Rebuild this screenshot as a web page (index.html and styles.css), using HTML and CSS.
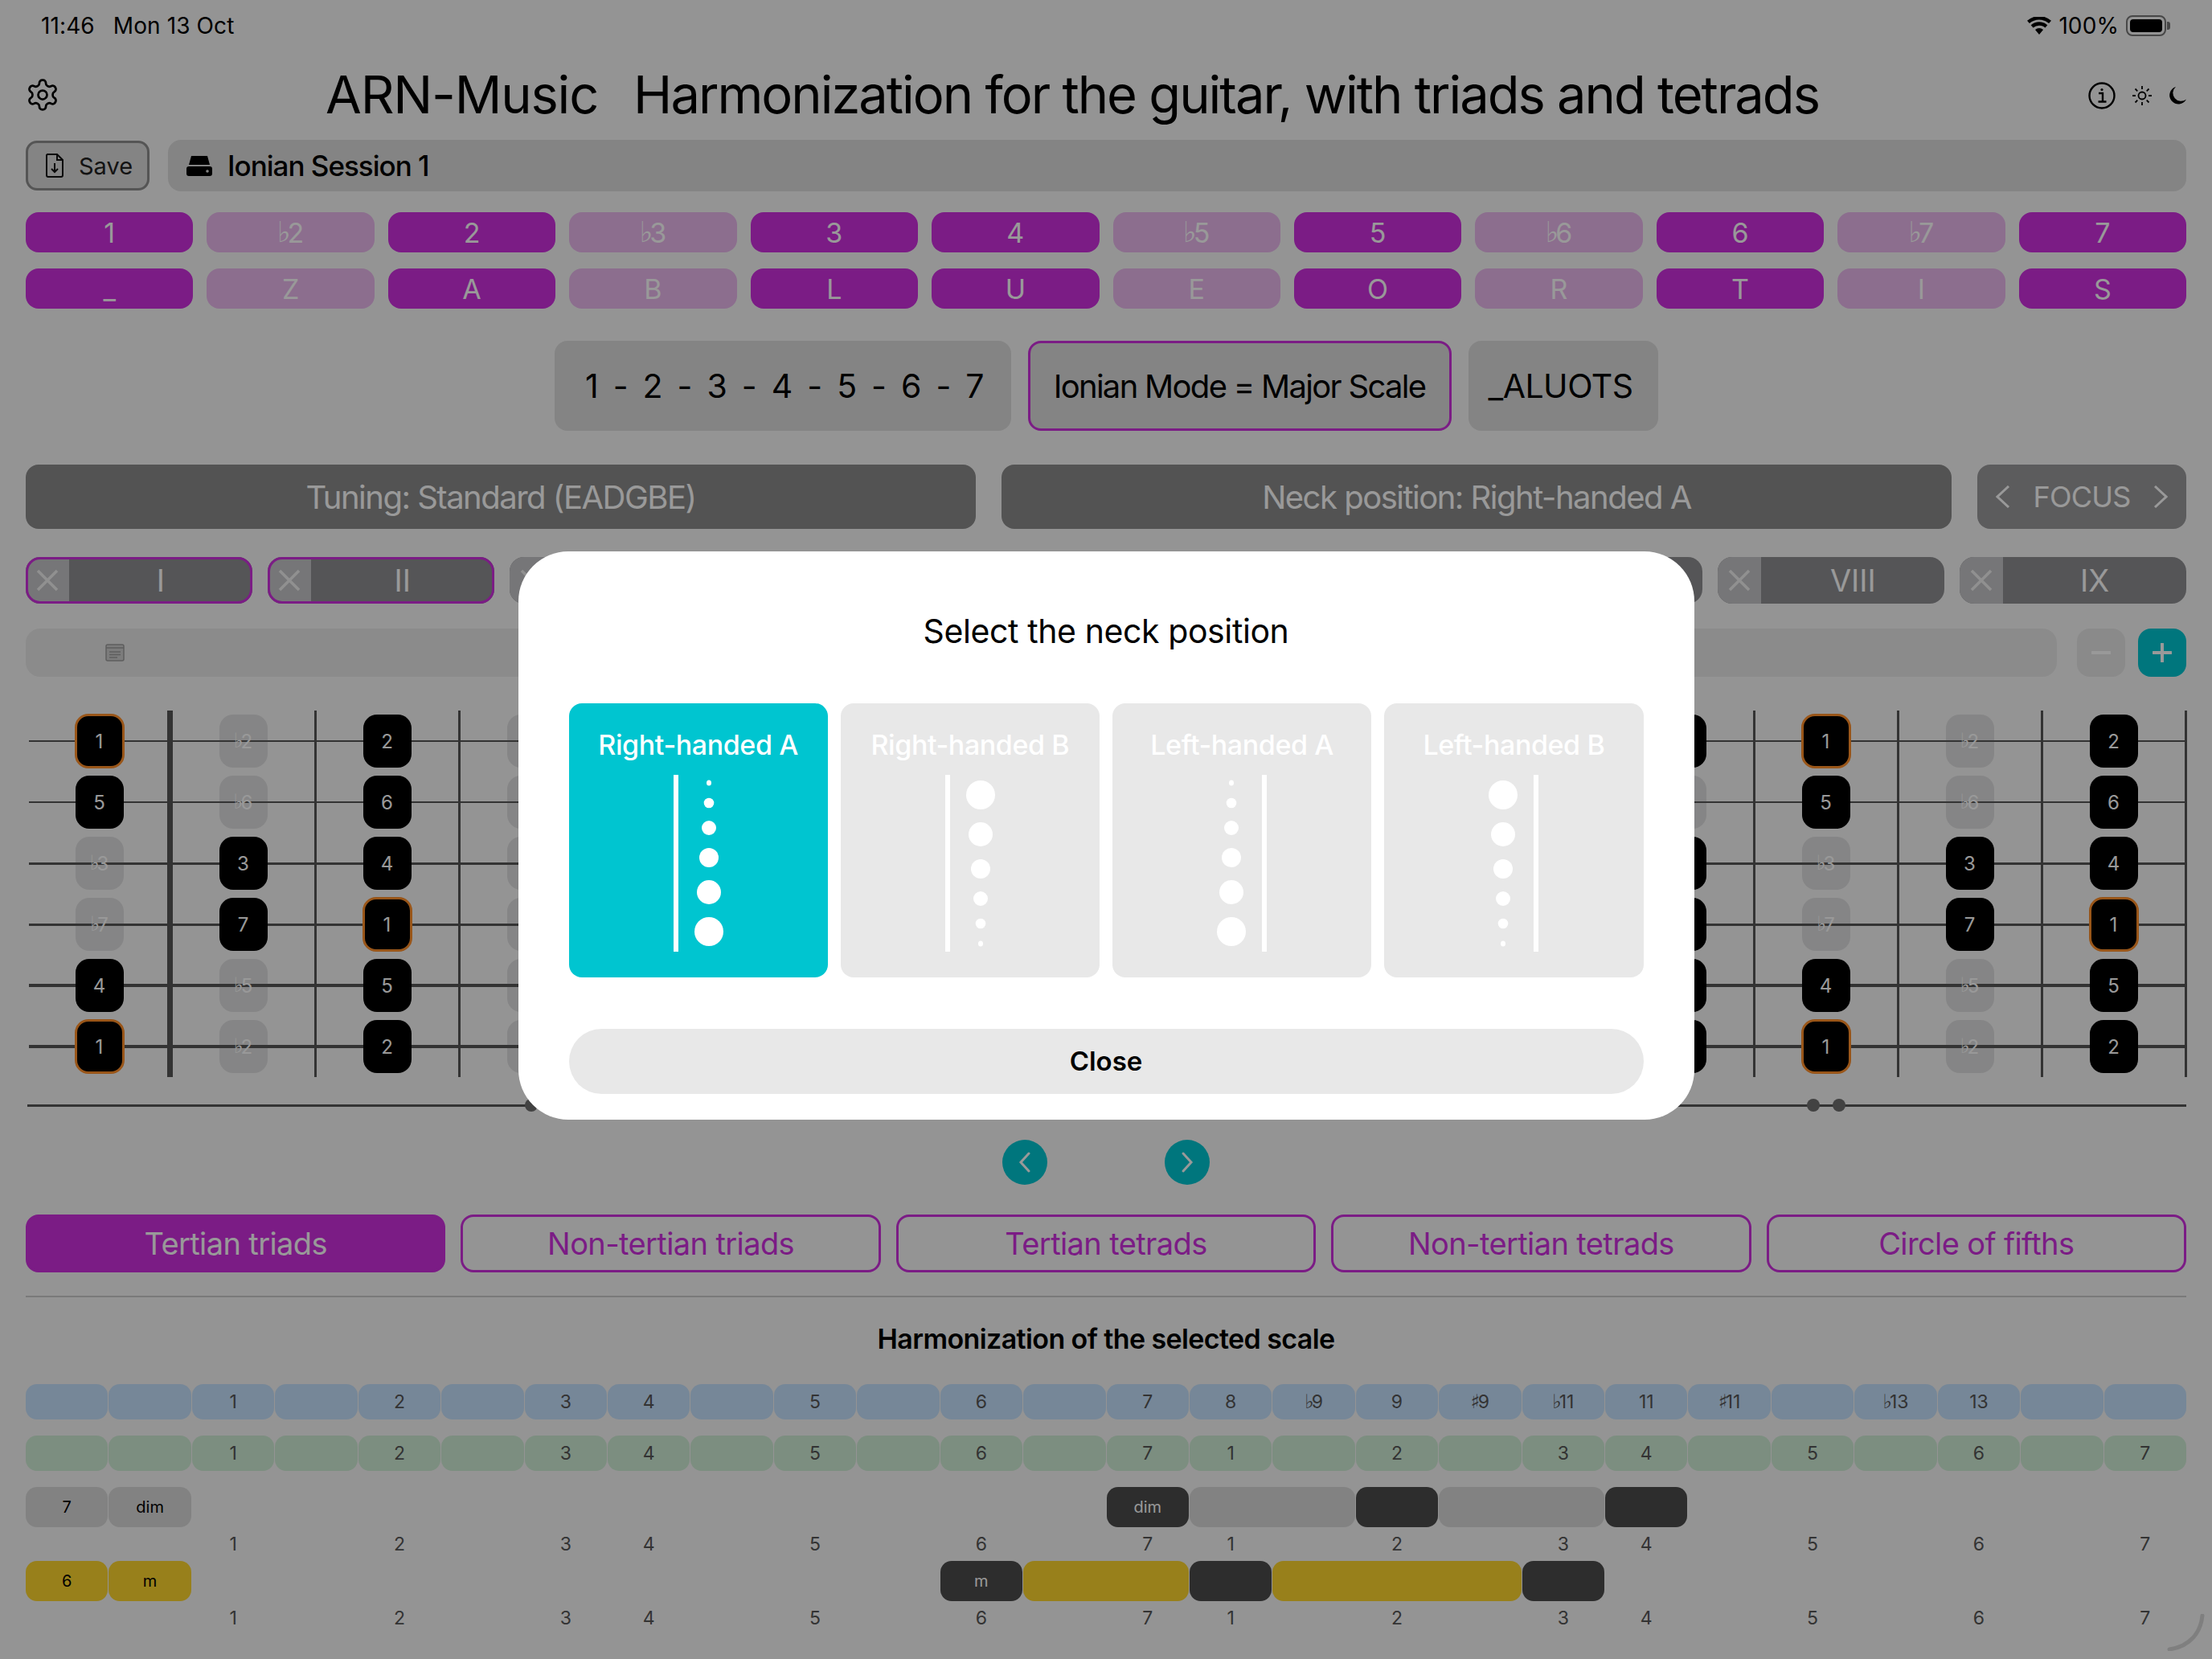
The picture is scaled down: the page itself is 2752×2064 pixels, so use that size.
FILE: index.html
```html
<!DOCTYPE html>
<html lang="en">
<head>
    <meta charset="UTF-8">
    <title>ARN-Music</title>
    <link rel="stylesheet" href="styles.css">
</head>
<body>
    <div class="page">
        <div class="status-bar">
            <div class="status-left"><span>11:46</span><span>Mon 13 Oct</span></div>
            <div class="status-right">
                <svg class="wifi" viewBox="0 0 30 22"><path d="M15 22l-5-6a7.5 7.5 0 0 1 10 0zM7.5 13.5L4.7 10.2a15.5 15.5 0 0 1 20.6 0l-2.8 3.3a11.3 11.3 0 0 0-15 0zM2.9 8L0 4.8a22.5 22.5 0 0 1 30 0L27.100 8a18.300 18.300 0 0 0-24.200 0z"/></svg>
                <span>100%</span>
                <div class="battery"><div class="battery-fill"></div></div>
            </div>
        </div>

        <header class="header">
            <svg class="gear" viewBox="0 0 24 24" fill="none" stroke="#000" stroke-width="1.5"><path d="M12.22 2h-.44a2 2 0 0 0-2 2v.18a2 2 0 0 1-1 1.73l-.43.25a2 2 0 0 1-2 0l-.15-.08a2 2 0 0 0-2.73.73l-.22.38a2 2 0 0 0 .73 2.73l.15.1a2 2 0 0 1 1 1.72v.51a2 2 0 0 1-1 1.74l-.15.09a2 2 0 0 0-.73 2.73l.22.38a2 2 0 0 0 2.73.73l.15-.08a2 2 0 0 1 2 0l.43.25a2 2 0 0 1 1 1.73V20a2 2 0 0 0 2 2h.44a2 2 0 0 0 2-2v-.18a2 2 0 0 1 1-1.73l.43-.25a2 2 0 0 1 2 0l.15.08a2 2 0 0 0 2.73-.73l.22-.39a2 2 0 0 0-.73-2.73l-.15-.08a2 2 0 0 1-1-1.74v-.5a2 2 0 0 1 1-1.74l.15-.09a2 2 0 0 0 .73-2.73l-.22-.38a2 2 0 0 0-2.73-.73l-.15.08a2 2 0 0 1-2 0l-.43-.25a2 2 0 0 1-1-1.73V4a2 2 0 0 0-2-2z"/><circle cx="12" cy="12" r="3"/></svg>
            <h1 class="title"><span class="app-name">ARN-Music</span><span>Harmonization for the guitar, with triads and tetrads</span></h1>
            <div class="header-icons">
                <svg class="icon-info" viewBox="0 0 34 34" fill="none" stroke="#000" stroke-width="2.400"><circle cx="17" cy="17" r="15.500"/><path d="M13 14h5v10M12.500 24.500h10"/><circle cx="17" cy="9.500" r="1.600" fill="#000" stroke="none"/></svg>
                <svg class="icon-sun" viewBox="0 0 26 26" fill="none" stroke="#000" stroke-width="1.800"><circle cx="13" cy="13" r="4.500"/><path d="M13 1v4M13 21v4M1 13h4M21 13h4M4.500 4.500l2.800 2.800M18.700 18.700l2.800 2.800M4.500 21.500l2.800-2.800M18.700 7.300l2.800-2.800"/></svg>
                <svg class="icon-moon" viewBox="0 0 22 22"><path d="M9 0a11 11 0 1 0 13 15.500A10 10 0 0 1 9 0z"/></svg>
            </div>
        </header>

        <div class="session-row">
            <button class="save-btn">
                <svg viewBox="0 0 24 30" fill="none" stroke="#111" stroke-width="2"><path d="M3 1h12l7 7v19a2 2 0 0 1-2 2H4a2 2 0 0 1-2-2V2zM15 1v7h7M12 12v11M8 19l4 4 4-4"/></svg>
                Save
            </button>
            <div class="session-name">
                <svg viewBox="0 0 32 25"><path d="M6 0h20l3 11H3zM3 13h26a3 3 0 0 1 3 3v6a3 3 0 0 1-3 3H3a3 3 0 0 1-3-3v-6a3 3 0 0 1 3-3z"/><circle cx="26" cy="19" r="1.800" fill="#dcdcdc"/></svg>
                Ionian Session 1
            </div>
        </div>

        <div class="scale-grid">
            <div class="degree on">1</div>
            <div class="degree"><span class="flat">♭</span>2</div>
            <div class="degree on">2</div>
            <div class="degree"><span class="flat">♭</span>3</div>
            <div class="degree on">3</div>
            <div class="degree on">4</div>
            <div class="degree"><span class="flat">♭</span>5</div>
            <div class="degree on">5</div>
            <div class="degree"><span class="flat">♭</span>6</div>
            <div class="degree on">6</div>
            <div class="degree"><span class="flat">♭</span>7</div>
            <div class="degree on">7</div>
            <div class="degree on">_</div>
            <div class="degree">Z</div>
            <div class="degree on">A</div>
            <div class="degree">B</div>
            <div class="degree on">L</div>
            <div class="degree on">U</div>
            <div class="degree">E</div>
            <div class="degree on">O</div>
            <div class="degree">R</div>
            <div class="degree on">T</div>
            <div class="degree">I</div>
            <div class="degree on">S</div>
        </div>

        <div class="scale-info">
            <div class="info-box formula">1 - 2 - 3 - 4 - 5 - 6 - 7</div>
            <div class="info-box mode">Ionian Mode = Major Scale</div>
            <div class="info-box letters">_ALUOTS</div>
        </div>

        <div class="options-row">
            <div class="option">Tuning: Standard (EADGBE)</div>
            <div class="option">Neck position: Right-handed A</div>
            <div class="focus">
                <svg viewBox="0 0 18 28"><path d="M16 1L2 14l14 13"/></svg>
                <span>FOCUS</span>
                <svg viewBox="0 0 18 28"><path d="M2 1l14 13L2 27"/></svg>
            </div>
        </div>

        <div class="positions" id="positions"></div>

        <div class="notes-row">
            <div class="notes-field">
                <svg viewBox="0 0 24 22"><rect x="1" y="1" width="22" height="20" rx="2"/><path d="M1 5h22M5 10h14M5 13.500h14M5 17h10"/></svg>
            </div>
            <button class="step-btn minus"><svg viewBox="0 0 24 24"><path d="M1 12h22"/></svg></button>
            <button class="step-btn plus"><svg viewBox="0 0 24 24"><path d="M1 12h22M12 1v22"/></svg></button>
        </div>

        <div class="fretboard" id="fretboard"></div>
        <div class="markers" id="markers"></div>

        <div class="pager">
            <button class="round-btn"><svg viewBox="0 0 18 28"><path d="M14 3L4 14l10 11"/></svg></button>
            <button class="round-btn"><svg viewBox="0 0 18 28"><path d="M4 3l10 11L4 25"/></svg></button>
        </div>

        <div class="chord-tabs">
            <div class="chord-tab active">Tertian triads</div>
            <div class="chord-tab">Non-tertian triads</div>
            <div class="chord-tab">Tertian tetrads</div>
            <div class="chord-tab">Non-tertian tetrads</div>
            <div class="chord-tab">Circle of fifths</div>
        </div>

        <hr class="divider">
        <h2 class="section-title">Harmonization of the selected scale</h2>
        <div class="harmony" id="harmony"></div>
    </div>

    <div class="overlay">
        <div class="modal">
            <h3 class="modal-title">Select the neck position</h3>
            <div class="neck-cards">
                <div class="neck-card selected">
                    <div class="neck-label">Right-handed A</div>
                    <svg viewBox="0 0 322 220"><rect x="130" width="6" height="220"/><ellipse cx="174" cy="10" rx="3" ry="3.500"/><circle cx="174" cy="35" r="6.300"/><circle cx="174" cy="66" r="9"/><circle cx="174" cy="103" r="12"/><circle cx="174" cy="146" r="15"/><circle cx="174" cy="195" r="18"/></svg>
                </div>
                <div class="neck-card">
                    <div class="neck-label">Right-handed B</div>
                    <svg viewBox="0 0 322 220"><rect x="130" width="6" height="220"/><circle cx="174" cy="25" r="18"/><circle cx="174" cy="74" r="15"/><circle cx="174" cy="117" r="12"/><circle cx="174" cy="154" r="9"/><circle cx="174" cy="185" r="6.300"/><ellipse cx="174" cy="210" rx="3" ry="3.500"/></svg>
                </div>
                <div class="neck-card">
                    <div class="neck-label">Left-handed A</div>
                    <svg viewBox="0 0 322 220"><rect x="186" width="6" height="220"/><ellipse cx="148" cy="10" rx="3" ry="3.500"/><circle cx="148" cy="35" r="6.300"/><circle cx="148" cy="66" r="9"/><circle cx="148" cy="103" r="12"/><circle cx="148" cy="146" r="15"/><circle cx="148" cy="195" r="18"/></svg>
                </div>
                <div class="neck-card">
                    <div class="neck-label">Left-handed B</div>
                    <svg viewBox="0 0 322 220"><rect x="186" width="6" height="220"/><circle cx="148" cy="25" r="18"/><circle cx="148" cy="74" r="15"/><circle cx="148" cy="117" r="12"/><circle cx="148" cy="154" r="9"/><circle cx="148" cy="185" r="6.300"/><ellipse cx="148" cy="210" rx="3" ry="3.500"/></svg>
                </div>
            </div>
            <button class="close-btn">Close</button>
        </div>
        <svg class="pencil-mark" viewBox="0 0 50 46"><path d="M46 2c-2 20-14 38-41 42"/></svg>
    </div>

    <script src="script.js"></script>
</body>
</html>
```
FILE: styles.css
```css
* {
    box-sizing: border-box;
}

body {
    margin: 0;
    background-color: #f7f7f7;
    color: #000;
    font-family: Inter, "Noto Sans", sans-serif;
}

button {
    font-family: inherit;
    border: none;
    padding: 0;
}

.page {
    height: 2064px;
    padding: 0 32px;
    overflow: hidden;
}

.flat {
    font-family: "DejaVu Sans", sans-serif;
    font-size: 1.05em;
    font-weight: 700;
    line-height: 1;
    margin-right: -0.12em;
    vertical-align: 0.06em;
}

/* status bar */
.status-bar {
    display: flex;
    justify-content: space-between;
    align-items: center;
    height: 64px;
    padding: 0 19px;
    font-size: 28px;
    letter-spacing: 0.1px;
}

.status-left {
    display: flex;
    gap: 23px;
}

.status-right {
    display: flex;
    align-items: center;
    gap: 9px;
}

.wifi {
    width: 30px;
    height: 22px;
}

.battery {
    position: relative;
    width: 50px;
    height: 26px;
    padding: 3px;
    border: 2px solid #777;
    border-radius: 8px;
    margin-right: 6px;
}

.battery-fill {
    height: 100%;
    background: #000;
    border-radius: 4px;
}

.battery::after {
    content: "";
    position: absolute;
    right: -7px;
    top: 6px;
    width: 4px;
    height: 10px;
    border-radius: 0 3px 3px 0;
    background: #777;
}

/* header */
.header {
    display: flex;
    align-items: center;
    height: 110px;
}

.gear {
    width: 44px;
    height: 44px;
    margin: 0 0 2px -1px;
}

.title {
    flex: 1;
    display: flex;
    justify-content: center;
    gap: 44px;
    margin: 0 5px 4px 0;
    font-size: 65px;
    font-weight: 400;
    letter-spacing: -2px;
}

.app-name {
    letter-spacing: -1.2px;
}

.header-icons {
    display: flex;
    align-items: center;
    gap: 20px;
}

.icon-info {
    width: 34px;
    height: 34px;
}

.icon-sun {
    width: 26px;
    height: 26px;
}

.icon-moon {
    width: 22px;
    height: 22px;
}

/* session */
.session-row {
    display: flex;
    gap: 23px;
    height: 64px;
}

.save-btn {
    display: flex;
    align-items: center;
    gap: 18px;
    width: 154px;
    height: 62px;
    margin-top: 1px;
    padding-left: 21px;
    background: #dcdcdc;
    border: 3px solid #8e8e8e;
    border-radius: 14px;
    color: #222;
    font-size: 29px;
}

.save-btn svg {
    width: 24px;
    height: 30px;
}

.session-name {
    flex: 1;
    display: flex;
    align-items: center;
    gap: 19px;
    padding-left: 23px;
    background: #dcdcdc;
    border-radius: 16px;
    font-size: 35px;
    font-weight: 500;
    letter-spacing: -1px;
}

.session-name svg {
    width: 32px;
    height: 25px;
}

/* scale */
.scale-grid {
    display: grid;
    grid-template-columns: repeat(12, 1fr);
    grid-auto-rows: 50px;
    gap: 20px 17px;
    margin-top: 26px;
}

.degree {
    display: flex;
    align-items: center;
    justify-content: center;
    background: #e9b7ed;
    border-radius: 16px;
    color: #fff;
    font-size: 34px;
}

.degree.on {
    background: #cd2fde;
}

.scale-info {
    display: flex;
    justify-content: center;
    gap: 21px;
    margin-top: 40px;
}

.info-box {
    display: flex;
    align-items: center;
    justify-content: center;
    height: 112px;
    background: #dcdcdc;
    border-radius: 16px;
    font-size: 41px;
    letter-spacing: -0.5px;
}

.formula {
    width: 568px;
    padding-left: 5px;
    word-spacing: 7.5px;
}

.mode {
    width: 527px;
    border: 3px solid #cd2fde;
    font-size: 40px;
    letter-spacing: -1.7px;
}

.letters {
    width: 236px;
    padding-right: 6px;
}

.options-row {
    display: flex;
    gap: 32px;
    margin-top: 42px;
    height: 80px;
}

.option {
    flex: 1;
    display: flex;
    align-items: center;
    justify-content: center;
    background: #8a8a8a;
    border-radius: 16px;
    color: #fff;
    font-size: 40px;
    letter-spacing: -1.5px;
}

.focus {
    display: flex;
    align-items: center;
    justify-content: space-between;
    width: 260px;
    padding: 0 23px;
    background: #9a9a9c;
    border-radius: 16px;
    color: #fff;
    font-size: 36px;
    letter-spacing: -0.8px;
}

.focus svg {
    width: 18px;
    height: 28px;
    fill: none;
    stroke: #fff;
    stroke-width: 3;
}

/* neck positions */
.positions {
    display: grid;
    grid-template-columns: repeat(9, 1fr);
    gap: 19px;
    margin-top: 35px;
    height: 58px;
}

.position {
    display: flex;
    overflow: hidden;
    background: #8e8e91;
    border-radius: 18px;
    color: #fff;
    font-size: 38px;
}

.position.active {
    outline: 3px solid #cd2fde;
    outline-offset: -3px;
}

.position-close {
    display: flex;
    align-items: center;
    justify-content: center;
    width: 54px;
    background: #c5c5c8;
}

.position-close svg {
    width: 28px;
    height: 28px;
    fill: none;
    stroke: #f0f0f0;
    stroke-width: 3.500;
}

.position-name {
    flex: 1;
    text-align: center;
    line-height: 58px;
}

.notes-row {
    display: flex;
    gap: 16px;
    margin-top: 31px;
    height: 60px;
}

.notes-field {
    flex: 1;
    display: flex;
    align-items: center;
    padding-left: 99px;
    margin-right: 9px;
    background: #e8e8e8;
    border-radius: 18px;
}

.notes-field svg {
    width: 24px;
    height: 22px;
    fill: #cfcfcf;
    stroke: #9c9c9c;
    stroke-width: 1.500;
}

.step-btn {
    display: flex;
    align-items: center;
    justify-content: center;
    width: 60px;
    border-radius: 16px;
}

.step-btn svg {
    width: 24px;
    height: 24px;
    fill: none;
    stroke: #fff;
    stroke-width: 4;
    stroke-linecap: round;
}

.minus {
    background: #e6e6e6;
}

.plus {
    background: #00c5d0;
}

/* fretboard */
.fretboard {
    display: grid;
    grid-template-columns: repeat(15, 179px);
    grid-auto-rows: 76px;
    margin: 42px 0 0 3.5px;
}

.cell {
    display: flex;
    align-items: center;
    justify-content: center;
    background-image: linear-gradient(#555, #555), linear-gradient(#555, #555);
    background-repeat: no-repeat;
    background-position: right center, center;
    background-size: 3px 100%, 100% var(--string);
}

.cell.nut {
    background-size: 7px 100%, 100% var(--string);
}

.note {
    display: flex;
    align-items: center;
    justify-content: center;
    width: 60px;
    height: 66px;
    margin-right: 3px;
    border-radius: 17px;
    background: rgba(100, 100, 105, 0.17);
    color: #fff;
    font-size: 24px;
}

.note.on {
    background: #000;
}

.note.root {
    width: 62px;
    height: 68px;
    border: 3px solid #ff8f2b;
}

.markers {
    display: grid;
    grid-template-columns: repeat(15, 179px);
    height: 70px;
    margin-left: 2px;
    align-items: center;
    background: linear-gradient(#555, #555) center / 100% 3px no-repeat;
}

.marker {
    display: flex;
    justify-content: center;
    gap: 16px;
}

.marker i {
    width: 16px;
    height: 16px;
    border-radius: 50%;
    background: #6e6e6e;
}

.pager {
    display: flex;
    justify-content: center;
    gap: 146px;
    margin-top: 8px;
    height: 56px;
}

.round-btn {
    display: flex;
    align-items: center;
    justify-content: center;
    width: 56px;
    border-radius: 50%;
    background: #00c5d0;
}

.round-btn svg {
    width: 18px;
    height: 28px;
    fill: none;
    stroke: #fff;
    stroke-width: 3;
    stroke-linecap: round;
}

.chord-tabs {
    display: grid;
    grid-template-columns: repeat(5, 1fr);
    gap: 19px;
    margin-top: 37px;
    height: 72px;
}

.chord-tab {
    display: flex;
    align-items: center;
    justify-content: center;
    border: 3px solid #cd2fde;
    border-radius: 16px;
    color: #cd2fde;
    font-size: 38px;
    letter-spacing: -0.6px;
}

.chord-tab.active {
    background: #cd2fde;
    color: #fff;
}

.divider {
    height: 2px;
    margin: 29px 0 0;
    border: none;
    background: #cbcbcb;
}

.section-title {
    margin: 32px 0 0;
    font-size: 34px;
    font-weight: 600;
    line-height: 40px;
    text-align: center;
    letter-spacing: -0.6px;
}

/* harmonization grid */
.harmony {
    display: grid;
    grid-template-columns: repeat(26, 1fr);
    grid-template-rows: 44px 20px 44px 20px 50px 42px 50px 42px;
    column-gap: 1px;
    margin-top: 36px;
    font-size: 23px;
    color: #555;
}

.h-cell {
    display: flex;
    align-items: center;
    justify-content: center;
    border-radius: 14px;
}

.blue {
    background: #c5e1fd;
}

.green {
    background: #cfedd5;
}

.tall {
    font-size: 20px;
    color: #000;
}

.soft {
    background: #d9d9d9;
}

.gold {
    background: #fdd52d;
}

.dark {
    background: #4b4b4b;
    color: #fff;
}

/* modal */
.overlay {
    position: fixed;
    top: 0;
    left: 0;
    right: 0;
    bottom: 0;
    display: flex;
    justify-content: center;
    align-items: flex-start;
    padding-top: 686px;
    background: rgba(0, 0, 0, 0.4);
}

.modal {
    width: 1463px;
    height: 707px;
    padding: 69px 63px 0;
    background: #fff;
    border-radius: 62px;
}

.modal-title {
    margin: 0 0 60px;
    font-size: 41px;
    font-weight: 400;
    line-height: 60px;
    text-align: center;
    letter-spacing: -0.4px;
}

.neck-cards {
    display: grid;
    grid-template-columns: repeat(4, 1fr);
    gap: 16px;
}

.neck-card {
    height: 341px;
    padding-top: 30px;
    background: #e8e8e8;
    border-radius: 16px;
    color: #fff;
    text-align: center;
}

.neck-card.selected {
    background: #00c5d0;
}

.neck-label {
    height: 44px;
    margin-bottom: 15px;
    font-size: 34px;
    font-weight: 500;
    line-height: 44px;
    letter-spacing: -0.4px;
}

.neck-card svg {
    display: block;
    width: 322px;
    height: 220px;
    fill: #fff;
}

.close-btn {
    display: block;
    width: 100%;
    height: 81px;
    margin-top: 64px;
    padding-bottom: 2px;
    background: #e8e8e8;
    border-radius: 41px;
    color: #000;
    font-size: 33px;
    font-weight: 600;
}

.pencil-mark {
    position: absolute;
    left: 2694px;
    top: 2008px;
    width: 50px;
    height: 46px;
    fill: none;
    stroke: #7f7f7f;
    stroke-width: 5;
    stroke-linecap: round;
}
```
FILE: script.js
```js
// Grados de la escala por semitono
const names = ['1', 'b2', '2', 'b3', '3', '4', 'b5', '5', 'b6', '6', 'b7', '7'];
const inScale = [0, 2, 4, 5, 7, 9, 11];
const openStrings = [0, 7, 3, 10, 5, 0];
const stringWidths = [2, 2, 3, 3, 4, 4];

function label(text) {
    return text
        .replace(/^b/, '<span class="flat">♭</span>')
        .replace(/^#/, '<span class="flat">♯</span>');
}

// Pestañas de posiciones
const positions = document.getElementById('positions');
['I', 'II', 'III', 'IV', 'V', 'VI', 'VII', 'VIII', 'IX'].forEach((name, index) => {
    const tab = document.createElement('div');
    tab.className = index < 2 ? 'position active' : 'position';
    tab.innerHTML = '<div class="position-close"><svg viewBox="0 0 28 28"><path d="M2 2l24 24M26 2L2 26"/></svg></div>'
        + `<div class="position-name">${name}</div>`;
    positions.appendChild(tab);
});

// Mástil: 6 cuerdas, 15 columnas (las columnas 4 a 10 quedan tapadas por el modal)
const fretboard = document.getElementById('fretboard');
openStrings.forEach((open, row) => {
    for (let col = 0; col < 15; col++) {
        const semi = (open + col) % 12;
        const cell = document.createElement('div');
        cell.className = col === 0 ? 'cell nut' : 'cell';
        cell.style.setProperty('--string', stringWidths[row] + 'px');

        if (col < 4 || col > 10) {
            const note = document.createElement('div');
            note.className = 'note';
            if (inScale.includes(semi)) note.classList.add('on');
            if (semi === 0) note.classList.add('root');
            note.innerHTML = label(names[semi]);
            cell.appendChild(note);
        }
        fretboard.appendChild(cell);
    }
});

// Marcadores debajo del mástil
const markers = document.getElementById('markers');
for (let col = 0; col < 15; col++) {
    const marker = document.createElement('div');
    marker.className = 'marker';
    if ([3, 5, 7, 9].includes(col)) marker.innerHTML = '<i></i>';
    if (col === 12) marker.innerHTML = '<i></i><i></i>';
    markers.appendChild(marker);
}

// Tabla de armonización
const intervals = ['', '', '1', '', '2', '', '3', '4', '', '5', '', '6', '', '7', '8', 'b9', '9', '#9', 'b11', '11', '#11', '', 'b13', '13', '', ''];
const degrees = ['', '', '1', '', '2', '', '3', '4', '', '5', '', '6', '', '7', '1', '', '2', '', '3', '4', '', '5', '', '6', '', '7'];
const harmony = document.getElementById('harmony');

function addCell(text, className, row, col, span) {
    const cell = document.createElement('div');
    cell.className = 'h-cell ' + className;
    cell.style.gridRow = row;
    cell.style.gridColumn = `${col + 1} / span ${span || 1}`;
    cell.innerHTML = label(text);
    harmony.appendChild(cell);
}

intervals.forEach((text, col) => addCell(text, 'blue', 1, col));
degrees.forEach((text, col) => addCell(text, 'green', 3, col));

addCell('7', 'tall soft', 5, 0);
addCell('dim', 'tall soft', 5, 1);
addCell('dim', 'tall dark', 5, 13);
addCell('', 'soft', 5, 14, 2);
addCell('', 'dark', 5, 16);
addCell('', 'soft', 5, 17, 2);
addCell('', 'dark', 5, 19);

addCell('6', 'tall gold', 7, 0);
addCell('m', 'tall gold', 7, 1);
addCell('m', 'tall dark', 7, 11);
addCell('', 'gold', 7, 12, 2);
addCell('', 'dark', 7, 14);
addCell('', 'gold', 7, 15, 3);
addCell('', 'dark', 7, 18);

degrees.forEach((text, col) => {
    if (text) {
        addCell(text, '', 6, col);
        addCell(text, '', 8, col);
    }
});
```
